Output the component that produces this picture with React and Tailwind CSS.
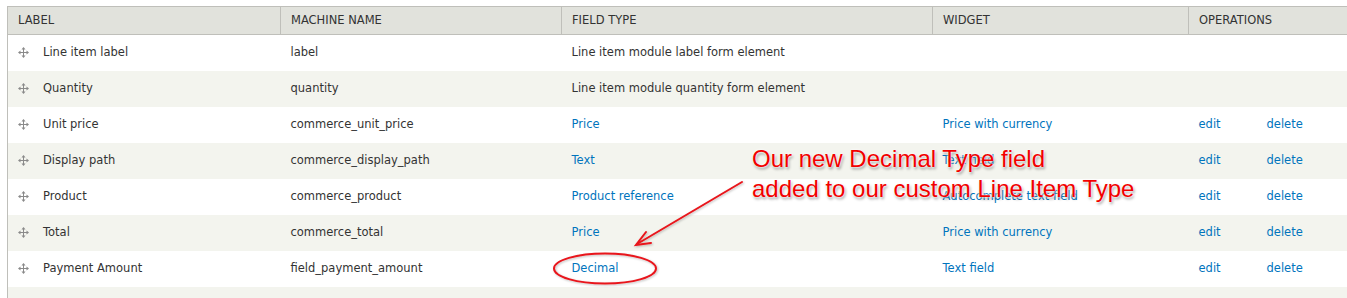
import React from "react";

const rows = [
  { label: "Line item label", machine: "label", type: "Line item module label form element", plain: true },
  { label: "Quantity", machine: "quantity", type: "Line item module quantity form element", plain: true },
  { label: "Unit price", machine: "commerce_unit_price", type: "Price", widget: "Price with currency" },
  { label: "Display path", machine: "commerce_display_path", type: "Text", widget: "Text field" },
  { label: "Product", machine: "commerce_product", type: "Product reference", widget: "Autocomplete text field" },
  { label: "Total", machine: "commerce_total", type: "Price", widget: "Price with currency" },
  { label: "Payment Amount", machine: "field_payment_amount", type: "Decimal", widget: "Text field" },
];

function DragHandle() {
  return (
    <svg width="11" height="11" viewBox="0 0 11 11" className="shrink-0">
      <g stroke="#8a8a8a" strokeWidth="1" fill="none">
        <line x1="5.5" y1="1" x2="5.5" y2="10" />
        <line x1="1" y1="5.5" x2="10" y2="5.5" />
      </g>
      <g fill="#8a8a8a">
        <polygon points="5.5,0 3.5,2.5 7.5,2.5" />
        <polygon points="5.5,11 3.5,8.5 7.5,8.5" />
        <polygon points="0,5.5 2.5,3.5 2.5,7.5" />
        <polygon points="11,5.5 8.5,3.5 8.5,7.5" />
      </g>
    </svg>
  );
}

export default function App() {
  const th = "h-[28px] px-[10px] text-left font-normal uppercase text-[#333] border-r border-[#bfbfba]";
  return (
    <div className="relative w-[1347px] h-[298px] overflow-hidden bg-white font-['DejaVu_Sans',sans-serif] text-[11.5px] text-[#333]">
      <div className="h-[6px] overflow-hidden flex justify-end">
        <a className="-mt-[11px] -mr-[34px] leading-[14px] text-[#0074bd]">Show row weights</a>
      </div>
      <div className="pl-[7px]">
        <table className="table-fixed border-collapse w-[1360px] border-l border-[#bfbfba]">
          <colgroup>
            <col className="w-[273px]" />
            <col className="w-[281px]" />
            <col className="w-[371px]" />
            <col className="w-[256px]" />
            <col className="w-[68px]" />
            <col />
          </colgroup>
          <thead>
            <tr className="bg-[#e1e2dc] border-t border-b border-[#bfbfba]">
              <th className={th}>Label</th>
              <th className={th}>Machine name</th>
              <th className={th}>Field type</th>
              <th className={th}>Widget</th>
              <th className={th} colSpan={2}>Operations</th>
            </tr>
          </thead>
          <tbody>
            {rows.map((r, i) => (
              <tr key={r.machine} className={i % 2 ? "h-[36px] bg-[#f3f4ee]" : "h-[36px] bg-white"}>
                <td className="pl-[10px] pr-[10px]">
                  <div className="flex items-center gap-[14px]">
                    <DragHandle />
                    <span>{r.label}</span>
                  </div>
                </td>
                <td className="px-[10px]">{r.machine}</td>
                <td className={r.plain ? "px-[10px]" : "px-[10px] text-[#0074bd]"}>{r.type}</td>
                <td className="px-[10px] text-[#0074bd]">{r.widget}</td>
                <td className="px-[10px] text-[#0074bd]">{r.plain ? "" : "edit"}</td>
                <td className="px-[10px] text-[#0074bd]">{r.plain ? "" : "delete"}</td>
              </tr>
            ))}
            <tr className="h-[36px] bg-[#f3f4ee]">
              <td colSpan={6}></td>
            </tr>
          </tbody>
        </table>
      </div>

      <svg className="absolute left-0 top-0 pointer-events-none" width="1347" height="298" viewBox="0 0 1347 298">
        <defs>
          <filter id="soft" x="-20%" y="-50%" width="140%" height="200%">
            <feDropShadow dx="1" dy="1" stdDeviation="1.2" floodColor="#000" floodOpacity="0.25" />
          </filter>
        </defs>
        <g filter="url(#soft)" stroke="#e8141b" strokeWidth="2" fill="none" strokeLinecap="round">
          <line x1="742" y1="182" x2="637" y2="244" />
          <polyline points="646,232 636,245 651,243" />
          <ellipse cx="605" cy="268.5" rx="51" ry="15" />
        </g>
      </svg>

      <div className="absolute left-[752px] top-[144px] font-['Liberation_Sans',Arial,sans-serif] text-[24px] leading-[30px] text-[#f20000] whitespace-nowrap [text-shadow:0_0_2px_#fff,0_0_3px_#fff,1px_2px_3px_rgba(0,0,0,0.45)]">
        <div>Our new Decimal Type field</div>
        <div>added to our custom Line Item Type</div>
      </div>
    </div>
  );
}
